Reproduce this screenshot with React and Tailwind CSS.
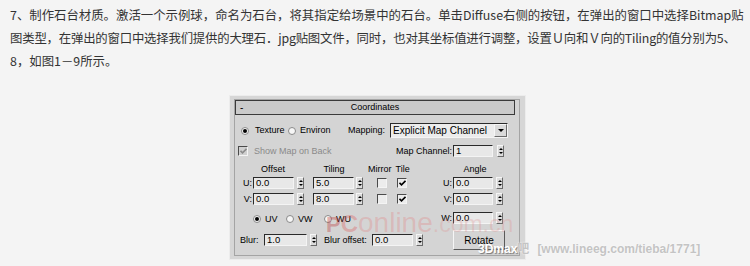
import React from "react";

function Spinner() {
  return (
    <div className="flex h-[12px] w-[7px] shrink-0 flex-col items-center justify-center gap-[2px] border border-b-[#6a6a6a] border-l-[#f6f6f6] border-r-[#6a6a6a] border-t-[#f6f6f6] bg-[#dcdcdc]">
      <div className="h-0 w-0 border-x-[2px] border-b-[2px] border-x-transparent border-b-black" />
      <div className="h-0 w-0 border-x-[2px] border-t-[2px] border-x-transparent border-t-black" />
    </div>
  );
}

function Field({ value, w }) {
  return (
    <div
      className={
        "h-[12px] shrink-0 border border-b-[#f4f4f4] border-l-[#2a2a2a] border-r-[#f4f4f4] border-t-[#2a2a2a] bg-[#e8e8e8] pl-[2px] text-[9.5px] leading-[10px] text-black " +
        w
      }
    >
      {value}
    </div>
  );
}

function Radio({ on }) {
  return (
    <div className="flex h-[8px] w-[8px] shrink-0 items-center justify-center rounded-full border border-[#8a8a8a] bg-[#f6f6f6]">
      {on && <div className="h-[4px] w-[4px] rounded-full bg-black" />}
    </div>
  );
}

function Check({ on, disabled }) {
  return (
    <div
      className={
        "flex h-[10px] w-[10px] shrink-0 items-center justify-center border border-b-[#f4f4f4] border-l-[#4a4a4a] border-r-[#f4f4f4] border-t-[#4a4a4a] " +
        (disabled ? "bg-[#d0d0d0]" : "bg-[#ececec]")
      }
    >
      {on && (
        <svg width="7" height="6" viewBox="0 0 7 6">
          <path
            d="M0.5 2.8 L2.5 4.8 L6.5 0.8"
            fill="none"
            stroke={disabled ? "#8c8c8c" : "#000"}
            strokeWidth="1.6"
          />
        </svg>
      )}
    </div>
  );
}

function SpinRow({ label, value, labelW, fieldW, children }) {
  return (
    <div className="flex h-[12px] items-center">
      <span className={"shrink-0 text-right " + labelW}>{label}</span>
      <div className="ml-[1px]" />
      <Field value={value} w={fieldW} />
      <div className="ml-[3px]" />
      <Spinner />
      {children}
    </div>
  );
}

export default function App() {
  return (
    <div className="relative h-[266px] w-[750px] overflow-hidden bg-[#f4f4f4]">
      <p className="whitespace-nowrap pl-[10px] pt-[4px] font-['Noto_Sans_CJK_SC',sans-serif] text-[12.4px] leading-[23px] text-[#333]">
        <span>7、制作石台材质。激活一个示例球，命名为石台，将其指定给场景中的石台。单击Diffuse右侧的按钮，在弹出的窗口中选择Bitmap贴</span>
        <br />
        <span className="tracking-[-0.2px]">图类型，在弹出的窗口中选择我们提供的大理石．jpg贴图文件，同时，也对其坐标值进行调整，设置Ｕ向和Ｖ向的Tiling的值分别为5、</span>
        <br />
        <span>8，如图1－9所示。</span>
      </p>

      <div className="relative ml-[229px] mt-[22px] h-[165px] w-[297px] border border-[#ececec] bg-[#d6d6d6] pl-[4px] pt-[3px] font-['Liberation_Sans',Arial,sans-serif] text-[9px] leading-[11px] text-black">
        <div className="h-[157px] w-[286px] border border-[#a4a4a4] bg-[#d4d4d4]">
          {/* title bar */}
          <div className="relative flex h-[15px] w-[280px] items-center justify-center border border-[#3a3a3a] bg-[#cacaca]">
            <span className="absolute left-[4px] top-[1px] text-[10px]">-</span>
            <span>Coordinates</span>
          </div>

          {/* row 1 */}
          <div className="mt-[8px] flex h-[15px] items-center">
            <div className="ml-[6px]" />
            <Radio on />
            <span className="ml-[6px] w-[33px] shrink-0">Texture</span>
            <Radio />
            <span className="ml-[4px] w-[48px] shrink-0">Environ</span>
            <span className="w-[42px] shrink-0">Mapping:</span>
            <div className="flex h-[15px] w-[118px] items-center border border-b-[#f4f4f4] border-l-[#2a2a2a] border-r-[#f4f4f4] border-t-[#2a2a2a] bg-[#ececec]">
              <span className="flex-1 pl-[2px] text-[10px] leading-[12px]">Explicit Map Channel</span>
              <div className="flex h-[13px] w-[13px] items-center justify-center border border-b-[#6a6a6a] border-l-[#f6f6f6] border-r-[#6a6a6a] border-t-[#f6f6f6] bg-[#dadada]">
                <div className="h-0 w-0 border-x-[3px] border-t-[3px] border-x-transparent border-t-black" />
              </div>
            </div>
          </div>

          {/* row 2 */}
          <div className="mt-[7px] flex h-[12px] items-center">
            <div className="ml-[3px]" />
            <Check on disabled />
            <span className="ml-[6px] w-[138px] shrink-0 text-[#8a8a8a]">Show Map on Back</span>
            <span className="w-[60px] shrink-0 text-right">Map Channel:</span>
            <div className="ml-[1px]" />
            <Field value="1" w="w-[40px]" />
            <div className="ml-[4px]" />
            <Spinner />
          </div>

          {/* lower block */}
          <div className="mt-[5px] flex">
            {/* left column */}
            <div className="w-[205px] shrink-0">
              <div className="flex h-[14px] items-center">
                <span className="w-[76px] shrink-0 text-center">Offset</span>
                <span className="w-[46px] shrink-0 text-center">Tiling</span>
                <span className="ml-[11px] shrink-0">Mirror</span>
                <span className="ml-[4px] shrink-0">Tile</span>
              </div>
              <div className="mt-[1px]">
                <SpinRow label="U:" value="0.0" labelW="w-[17px]" fieldW="w-[41px]">
                  <div className="ml-[9px]" />
                  <Field value="5.0" w="w-[41px]" />
                  <div className="ml-[2px]" />
                  <Spinner />
                  <div className="ml-[14px]" />
                  <Check />
                  <div className="ml-[10px]" />
                  <Check on />
                </SpinRow>
              </div>
              <div className="mt-[4px]">
                <SpinRow label="V:" value="0.0" labelW="w-[17px]" fieldW="w-[41px]">
                  <div className="ml-[9px]" />
                  <Field value="8.0" w="w-[41px]" />
                  <div className="ml-[2px]" />
                  <Spinner />
                  <div className="ml-[14px]" />
                  <Check />
                  <div className="ml-[10px]" />
                  <Check on />
                </SpinRow>
              </div>
              <div className="mt-[8px] flex h-[12px] items-center">
                <div className="ml-[18px]" />
                <Radio on />
                <span className="ml-[4px] w-[21px] shrink-0">UV</span>
                <Radio />
                <span className="ml-[4px] w-[26px] shrink-0">VW</span>
                <Radio />
                <span className="ml-[4px] shrink-0">WU</span>
              </div>
              <div className="mt-[9px] flex h-[12px] items-center">
                <span className="ml-[5px] w-[24px] shrink-0">Blur:</span>
                <Field value="1.0" w="w-[43px]" />
                <div className="ml-[3px]" />
                <Spinner />
                <span className="ml-[7px] w-[48px] shrink-0">Blur offset:</span>
                <Field value="0.0" w="w-[41px]" />
                <div className="ml-[3px]" />
                <Spinner />
              </div>
            </div>

            {/* right column */}
            <div className="w-[75px] shrink-0">
              <div className="flex h-[14px] w-[70px] items-center justify-center">Angle</div>
              <div className="mt-[1px]">
                <SpinRow label="U:" value="0.0" labelW="w-[12px]" fieldW="w-[40px]" />
              </div>
              <div className="mt-[4px]">
                <SpinRow label="V:" value="0.0" labelW="w-[12px]" fieldW="w-[40px]" />
              </div>
              <div className="mt-[7px]">
                <SpinRow label="W:" value="0.0" labelW="w-[12px]" fieldW="w-[40px]" />
              </div>
              <div className="ml-[13px] mt-[6px] flex h-[20px] w-[52px] items-center justify-center border border-b-[#5a5a5a] border-l-[#f6f6f6] border-r-[#5a5a5a] border-t-[#f6f6f6] bg-[#d4d4d4] text-[10px]">
                Rotate
              </div>
            </div>
          </div>
        </div>

        {/* PConline watermark */}
        <div className="pointer-events-none absolute left-[96px] top-[113px] flex items-baseline whitespace-nowrap font-['Liberation_Sans',Arial,sans-serif] leading-none">
          <span className="text-[22px] font-bold text-[rgba(190,60,60,0.4)]">P</span>
          <span className="text-[24px] font-bold text-[rgba(220,90,90,0.35)]">C</span>
          <span className="text-[28px] text-[rgba(225,130,130,0.32)]">online</span>
          <span className="text-[23px] text-[rgba(225,140,140,0.28)]">.com.cn</span>
        </div>
      </div>

      {/* 3Dmax watermark */}
      <div className="pointer-events-none absolute left-[478px] top-[243px] flex items-center whitespace-nowrap font-['Liberation_Sans','Noto_Sans_CJK_SC',sans-serif] text-[12px] font-bold leading-none">
        <span className="text-white [text-shadow:1px_1px_1px_#777]">3Dmax</span>
        <span className="text-[#c4c4c4] [text-shadow:0_0_2px_#fff]">吧</span>
        <span className="ml-[8px] text-[#c4c4c4] [text-shadow:0_0_2px_#fff]">[www.lineeg.com/tieba/1771]</span>
      </div>
    </div>
  );
}
